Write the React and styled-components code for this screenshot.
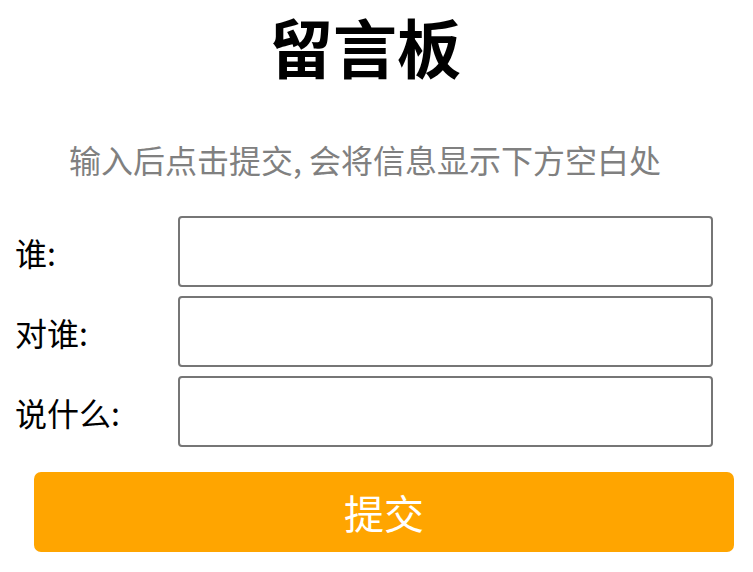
import React, { useState } from 'react'
import styled, { createGlobalStyle } from 'styled-components'

const GlobalStyle = createGlobalStyle`
    body {
        margin: 0;
        background: #ffffff;
        font-family: "Noto Sans CJK SC", "Noto Sans", sans-serif;
    }
`;

const Page = styled.div`
    width: 753px;
    display: flex;
    flex-direction: column;
`;

const Header = styled.div`
    width: 730px;
    display: flex;
    flex-direction: column;
    align-items: center;
`;

const Title = styled.h1`
    margin: 0;
    height: 90px;
    line-height: 90px;
    font-size: 64px;
    font-weight: 700;
    color: #000;
`;

const Subtitle = styled.p`
    margin: 49px 0 0;
    height: 40px;
    line-height: 40px;
    font-size: 32px;
    color: #808080;
`;

const Form = styled.form`
    display: flex;
    flex-direction: column;
    gap: 9px;
    margin-top: 37px;
    padding-left: 15px;
`;

const Row = styled.div`
    display: flex;
    align-items: center;
`;

const Label = styled.label`
    width: 163px;
    font-size: 32px;
    color: #000;
    padding-top: 1px;
`;

const Input = styled.input`
    box-sizing: border-box;
    width: 535px;
    height: 71px;
    border: 2px solid #767676;
    border-radius: 4px;
    font-size: 24px;
    padding: 0 10px;
    font-family: inherit;
    outline: none;
`;

const Submit = styled.button`
    margin: 25px 0 0 34px;
    width: 700px;
    height: 80px;
    border: none;
    border-radius: 7px;
    background: #ffa500;
    color: #fff;
    font-size: 40px;
    font-family: inherit;
    cursor: pointer;
`;

const fields = [
    { key: 'from', label: '谁:' },
    { key: 'to', label: '对谁:' },
    { key: 'msg', label: '说什么:' },
];

function App() {
    const [values, setValues] = useState({ from: '', to: '', msg: '' });

    return (
        <Page>
            <GlobalStyle />
            <Header>
                <Title>留言板</Title>
                <Subtitle>输入后点击提交, 会将信息显示下方空白处</Subtitle>
            </Header>
            <Form onSubmit={e => e.preventDefault()}>
                {fields.map(f => (
                    <Row key={f.key}>
                        <Label htmlFor={f.key}>{f.label}</Label>
                        <Input
                            id={f.key}
                            value={values[f.key]}
                            onChange={e => setValues({ ...values, [f.key]: e.target.value })}
                        />
                    </Row>
                ))}
            </Form>
            <Submit type="button">提交</Submit>
        </Page>
    );
}

export default App;
